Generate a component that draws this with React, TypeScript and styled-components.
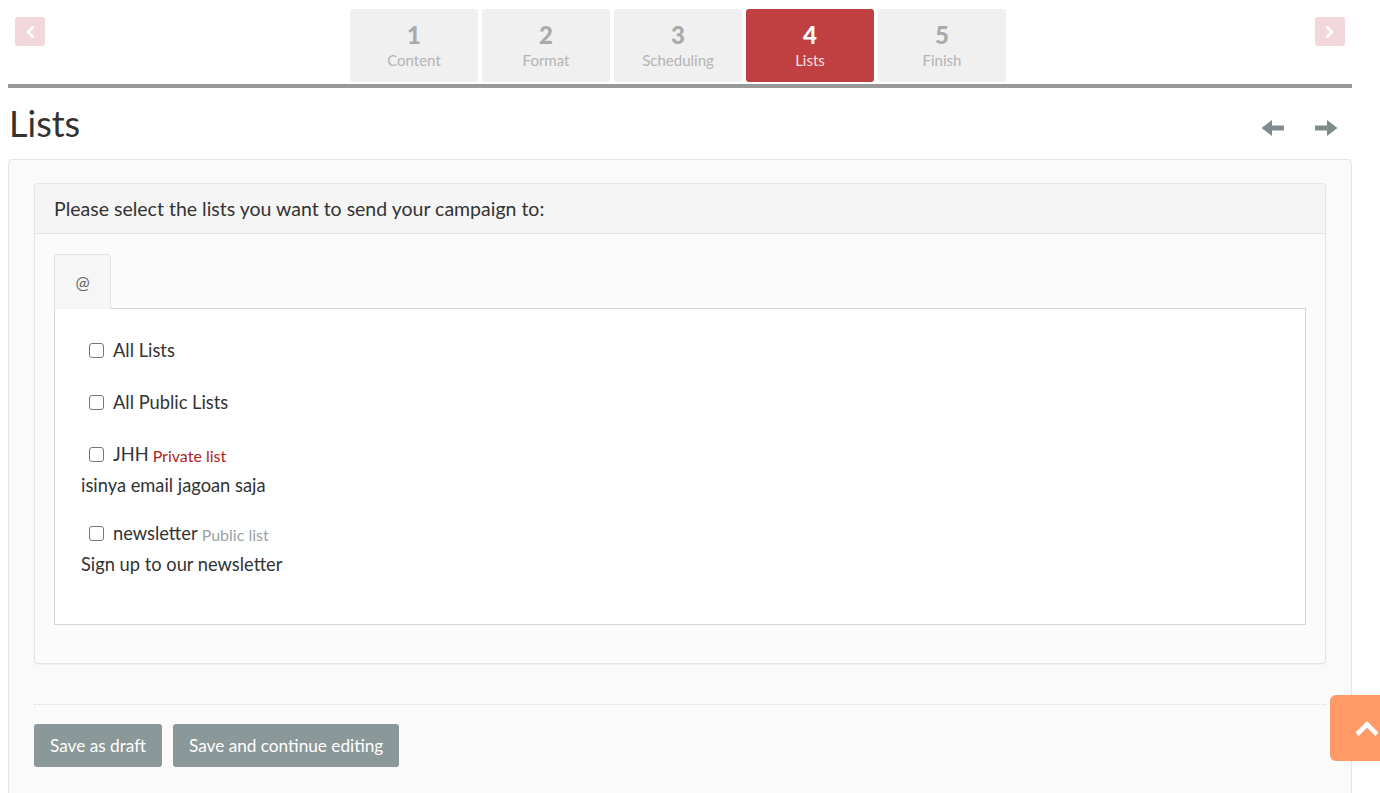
import React from "react"
import styled, { createGlobalStyle } from "styled-components"

const GlobalStyle = createGlobalStyle`
    html, body {
        margin: 0;
        padding: 0;
        background: #fff;
        font-family: Lato, "Open Sans", sans-serif;
        color: #333;
    }
    * { box-sizing: border-box; }
`

type StepType = { num: number, label: string }

const steps: StepType[] = [
    { num: 1, label: 'Content' },
    { num: 2, label: 'Format' },
    { num: 3, label: 'Scheduling' },
    { num: 4, label: 'Lists' },
    { num: 5, label: 'Finish' },
]

type ListType = { name: string, kind?: 'private' | 'public', description?: string }

const lists: ListType[] = [
    { name: 'All Lists' },
    { name: 'All Public Lists' },
    { name: 'JHH', kind: 'private', description: 'isinya email jagoan saja' },
    { name: 'newsletter', kind: 'public', description: 'Sign up to our newsletter' },
]

const Chevron = ({ dir }: { dir: 'left' | 'right' | 'up' }) => {
    const rotate = dir === 'left' ? 180 : dir === 'up' ? -90 : 0
    return (
        <svg width="12" height="12" viewBox="0 0 12 12" style={{ transform: `rotate(${rotate}deg)` }}>
            <path d="M3.5 1.5 L8 6 L3.5 10.5" fill="none" stroke="#fff" strokeWidth="2.6" strokeLinecap="square" />
        </svg>
    )
}

const Arrow = ({ dir }: { dir: 'left' | 'right' }) => (
    <svg width="23" height="18" viewBox="0 0 23 18" style={{ transform: dir === 'left' ? 'scaleX(-1)' : undefined }}>
        <path d="M0 6.5 H12 V1 L22.5 9 L12 17 V11.5 H0 Z" fill="#7f8c8d" />
    </svg>
)

export default function App() {
    return (
        <>
            <GlobalStyle />
            <Page>
                <StepNav>
                    <PagerButton aria-label="previous"><Chevron dir="left" /></PagerButton>
                    <Steps>
                        {steps.map(s => (
                            <Step key={s.num} active={s.num === 4}>
                                <StepNum>{s.num}</StepNum>
                                <StepLabel>{s.label}</StepLabel>
                            </Step>
                        ))}
                    </Steps>
                    <PagerButton aria-label="next"><Chevron dir="right" /></PagerButton>
                </StepNav>
                <TitleRow>
                    <Title>Lists</Title>
                    <TitleArrows>
                        <Arrow dir="left" />
                        <Arrow dir="right" />
                    </TitleArrows>
                </TitleRow>
                <Panel>
                    <InnerPanel>
                        <InnerHeader>Please select the lists you want to send your campaign to:</InnerHeader>
                        <InnerBody>
                            <TabBar>
                                <Tab>@</Tab>
                            </TabBar>
                            <TabContent>
                                {lists.map(l => (
                                    <ListItem key={l.name}>
                                        <CheckRow>
                                            <CheckBox type="checkbox" />
                                            <span>{l.name}</span>
                                            {l.kind && (
                                                <ListKind kind={l.kind}>
                                                    {l.kind === 'private' ? 'Private list' : 'Public list'}
                                                </ListKind>
                                            )}
                                        </CheckRow>
                                        {l.description && <Description>{l.description}</Description>}
                                    </ListItem>
                                ))}
                            </TabContent>
                        </InnerBody>
                    </InnerPanel>
                    <Separator />
                    <Actions>
                        <ActionButton>Save as draft</ActionButton>
                        <ActionButton>Save and continue editing</ActionButton>
                    </Actions>
                </Panel>
            </Page>
            <ScrollTop aria-label="scroll to top"><Chevron dir="up" /></ScrollTop>
        </>
    )
}

const Page = styled.div`
    margin-left: 8px;
    width: 1344px;
`

const StepNav = styled.div`
    display: flex;
    justify-content: space-between;
    align-items: flex-start;
    padding: 9px 7px 2px 7px;
    border-bottom: 4px solid #999;
`

const PagerButton = styled.button`
    width: 30px;
    height: 29px;
    margin-top: 8px;
    border: none;
    border-radius: 3px;
    background: #f2d8da;
    display: flex;
    align-items: center;
    justify-content: center;
    padding: 0;
`

const Steps = styled.div`
    display: flex;
    gap: 4px;
    margin-left: -4px;
`

const Step = styled.div<{ active?: boolean }>`
    width: 128px;
    height: 73px;
    border-radius: 3px;
    background: ${p => p.active ? '#c03f41' : '#f0f0f0'};
    color: ${p => p.active ? '#fff' : '#aaa'};
    display: flex;
    flex-direction: column;
    align-items: center;
    padding-top: 13px;
`

const StepNum = styled.div`
    font-size: 24px;
    font-weight: 900;
    line-height: 26px;
`

const StepLabel = styled.div`
    font-size: 15px;
    line-height: 20px;
    margin-top: 2px;
    opacity: 0.85;
`

const TitleRow = styled.div`
    display: flex;
    justify-content: space-between;
    align-items: center;
    height: 71px;
    padding-bottom: 2px;
`

const Title = styled.h1`
    margin: 0 0 0 1px;
    font-size: 36px;
    font-weight: 400;
    color: #333;
`

const TitleArrows = styled.div`
    display: flex;
    gap: 31px;
    margin-right: 14px;
    margin-top: 10px;
`

const Panel = styled.div`
    background: #fafafa;
    border: 1px solid #e6e6e6;
    border-radius: 4px;
    padding: 23px 25px 40px;
`

const InnerPanel = styled.div`
    border: 1px solid #e3e3e3;
    border-radius: 4px;
    background: #fbfbfb;
    box-shadow: 0 1px 1px rgba(0, 0, 0, 0.04);
`

const InnerHeader = styled.div`
    height: 50px;
    background: #f5f5f5;
    border-bottom: 1px solid #e3e3e3;
    border-radius: 4px 4px 0 0;
    padding: 0 19px;
    display: flex;
    align-items: center;
    font-size: 19.5px;
    color: #333;
`

const InnerBody = styled.div`
    padding: 20px 19px 38px;
`

const TabBar = styled.div`
    display: flex;
`

const Tab = styled.div`
    width: 57px;
    height: 55px;
    border: 1px solid #e3e3e3;
    border-bottom: none;
    border-radius: 4px 4px 0 0;
    background: #f6f6f6;
    display: flex;
    align-items: center;
    justify-content: center;
    font-size: 17px;
    color: #666;
    margin-bottom: -1px;
`

const TabContent = styled.div`
    background: #fff;
    border: 1px solid #d6d6d6;
    padding: 29px 26px 24px;
`

const ListItem = styled.div`
    margin-bottom: 28px;
`

const CheckRow = styled.label`
    display: flex;
    align-items: center;
    height: 24px;
    margin-left: 8px;
    font-size: 18.3px;
    color: #333;
`

const CheckBox = styled.input`
    appearance: none;
    width: 15px;
    height: 15px;
    margin: 0 9px 0 0;
    border: 1.5px solid #777;
    border-radius: 3px;
    background: #fff;
`

const ListKind = styled.span<{ kind: 'private' | 'public' }>`
    font-size: 16px;
    margin-left: 4px;
    margin-top: 2px;
    color: ${p => p.kind === 'private' ? '#b01e23' : '#99a3a4'};
`

const Description = styled.div`
    font-size: 18.3px;
    line-height: 24px;
    margin: 7px 0 -4px;
    color: #333;
`

const Separator = styled.div`
    border-top: 1px dotted #d9d9d9;
    margin-top: 40px;
`

const Actions = styled.div`
    display: flex;
    gap: 11px;
    margin-top: 19px;
`

const ActionButton = styled.button`
    height: 43px;
    padding: 0 16px;
    border: none;
    border-radius: 3px;
    background: #8a9899;
    color: #fff;
    font-family: inherit;
    font-size: 17.2px;
`

const ScrollTop = styled.button`
    position: fixed;
    left: 1330px;
    top: 695px;
    width: 70px;
    height: 66px;
    border: none;
    border-radius: 6px;
    background: #ff9966;
    display: flex;
    align-items: center;
    justify-content: center;
    padding: 0 0 0 4px;
    svg {
        width: 22px;
        height: 22px;
    }
`
